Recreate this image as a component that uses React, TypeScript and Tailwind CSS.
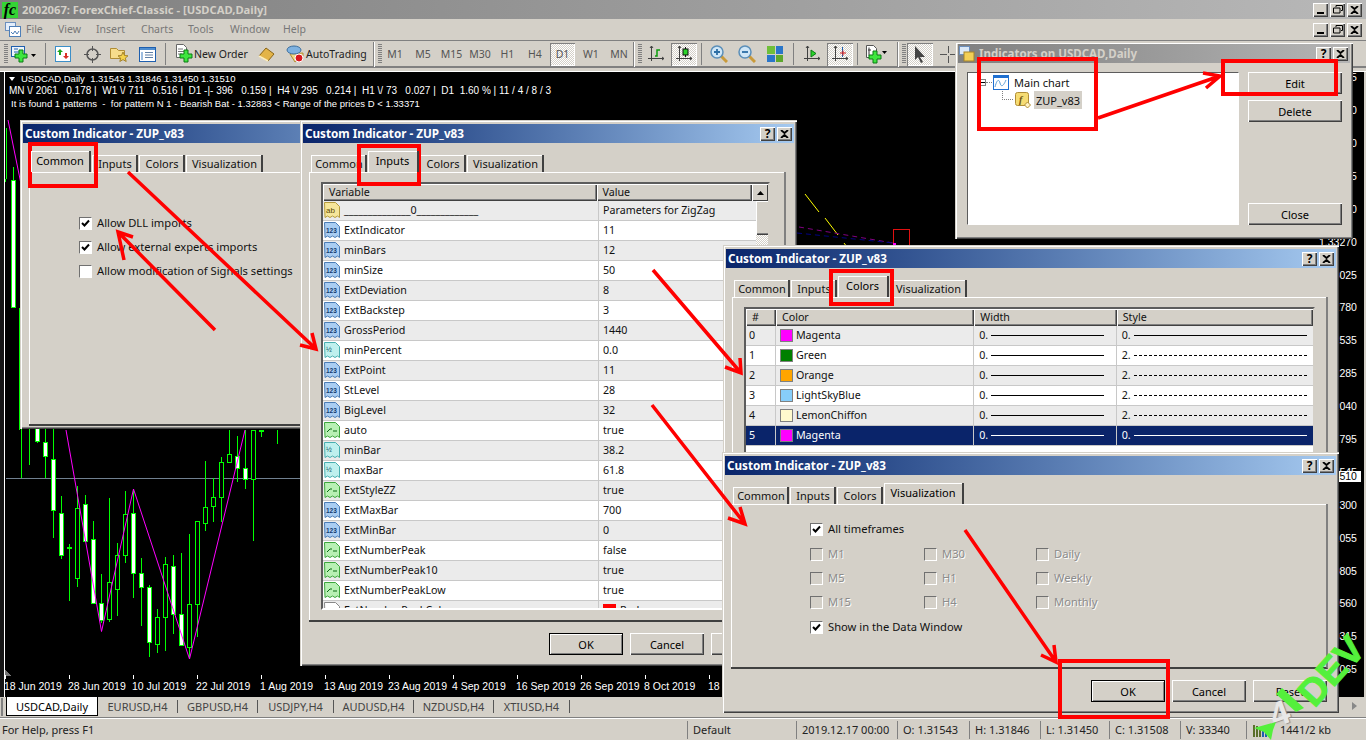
import type { ReactNode } from "react";

const raised = "shadow-[inset_1px_1px_0_#fff,inset_-1px_-1px_0_#404040,inset_-2px_-2px_0_#808080]";
const winFrame =
  "shadow-[inset_1px_1px_0_#d4d0c8,inset_2px_2px_0_#fff,inset_-1px_-1px_0_#404040,inset_-2px_-2px_0_#808080]";

// candles: [x in 8px steps, wick top, wick bottom, body top, body bottom, white body]
const candles: [number, number, number, number, number, boolean][] = [
  [0, 300, 478, 0, 0, false],
  [1, 300, 465, 0, 0, false],
  [2, 300, 443, 300, 441, true],
  [3, 300, 478, 442, 456, true],
  [4, 300, 538, 459, 510, true],
  [5, 496, 559, 513, 555, true],
  [6, 544, 601, 547, 548, false],
  [7, 486, 587, 508, 578, false],
  [8, 495, 542, 504, 541, true],
  [9, 521, 604, 539, 603, true],
  [10, 574, 623, 603, 620, true],
  [11, 498, 622, 582, 619, false],
  [12, 543, 616, 555, 589, false],
  [13, 491, 563, 514, 555, false],
  [14, 489, 598, 513, 573, true],
  [15, 558, 626, 573, 587, true],
  [16, 585, 657, 587, 642, true],
  [17, 609, 653, 617, 644, false],
  [18, 557, 651, 564, 617, false],
  [19, 555, 634, 566, 614, true],
  [20, 553, 646, 614, 645, true],
  [21, 534, 658, 604, 647, false],
  [22, 521, 637, 521, 604, false],
  [23, 461, 531, 507, 523, false],
  [24, 478, 522, 497, 506, false],
  [25, 457, 522, 462, 497, false],
  [26, 430, 463, 454, 462, false],
  [27, 436, 482, 456, 468, true],
  [28, 430, 489, 468, 479, true],
  [29, 430, 541, 430, 479, false],
  [30, 430, 437, 430, 431, false],
  [32, 430, 444, 0, 0, false],
];

function PriceChart() {
  const ticks = Array.from({ length: 12 }, (_, i) => 5 + i * 64);
  return (
    <svg className="absolute left-[-5px] top-[-72px] h-[740px] w-[1366px]" viewBox="0 0 1366 740" fill="none" shapeRendering="crispEdges">
      <path d="M5.5 478.5H1340" stroke="#708090" />
      <path d="M6.5 128V179M5.5 179V182" stroke="#0f0" />
      <rect x="11.5" y="180" width="4" height="127" fill="#fff" stroke="#0f0" />
      <path d="M13.5 167V180M19.5 308V430" stroke="#0f0" />
      {candles.map(([k, wt, wb, bt, bb, white]) => {
        const x = 21.5 + k * 8;
        return (
          <g key={k}>
            <path d={`M${x} ${wt}V${wb}`} stroke="#0f0" />
            {bb > 0 && <rect x={x - 2} y={bt + 0.5} width="4" height={bb - bt} fill={white ? "#fff" : "#000"} stroke="#0f0" />}
          </g>
        );
      })}
      <g shapeRendering="auto">
        <path d="M66 430L101.5 631.5L133.5 489L189.5 659L245 430" stroke="#f0f" />
        <path d="M8 120L21 184" stroke="#f0f" />
        <path d="M805 194L819 212M825 218L838 235M844 243L847 247" stroke="#ff0" />
        <path d="M799 227L893 243" stroke="#800080" strokeDasharray="5 4" />
        <path d="M797 233L893 243" stroke="#000080" strokeDasharray="5 4" />
      </g>
      <rect x="893.5" y="229.5" width="16" height="22" stroke="#e01010" />
      <rect x="893" y="243" width="3" height="4" fill="#f0f" />
      <path d="M5 670V676H11z" fill="#777" />
      {ticks.map((t) => (
        <path key={t} d={`M${t + 0.5} 675V679`} stroke="#fff" />
      ))}
    </svg>
  );
}

const axisDates = [
  "18 Jun 2019", "28 Jun 2019", "10 Jul 2019", "22 Jul 2019", "1 Aug 2019", "13 Aug 2019",
  "23 Aug 2019", "4 Sep 2019", "16 Sep 2019", "26 Sep 2019", "8 Oct 2019", "18 Oct 2019",
];
const priceLabels = [
  "1.34255", "1.34010", "1.33760", "1.33515", "1.33520", "1.33270", "1.33025", "1.32780", "1.32535",
  "1.32285", "1.32040", "1.31795", "1.31545", "1.31300", "1.31055", "1.30805", "1.30560", "1.30315", "1.30065",
];

function Doc({ fill, stroke, children }: { fill: string; stroke: string; children?: ReactNode }) {
  return (
    <svg width="16" height="17" viewBox="0 0 16 17" className="shrink-0">
      <path d="M.5.5h11l4 4v11l-2-1.500-2.500 1.500-2.500-1.500-2.500 1.500-2.500-1.500-2.500 1.500z" fill={fill} stroke={stroke} />
      {children}
    </svg>
  );
}
const rowIcons: Record<string, ReactNode> = {
  ab: (
    <Doc fill="#f6e69a" stroke="#b59b3c">
      <text x="2" y="11" fontSize="8" fill="#5c4a00" fontFamily="Liberation Sans">ab</text>
    </Doc>
  ),
  num: (
    <Doc fill="#a9cdf2" stroke="#4a7cb5">
      <text x="2" y="11" fontSize="6.500" fontWeight="700" fill="#123a70" fontFamily="Liberation Sans">123</text>
    </Doc>
  ),
  half: (
    <Doc fill="#bff0ee" stroke="#48aeb0">
      <text x="2" y="10" fontSize="7" fill="#0c5a66" fontFamily="Liberation Sans">½</text>
    </Doc>
  ),
  bool: (
    <Doc fill="#b8f0b4" stroke="#3da63d">
      <path d="M3 10l3-3h2M9 9h4" stroke="#0a6a14" fill="none" />
    </Doc>
  ),
  color: (
    <Doc fill="#fff" stroke="#888">
      <rect x="2" y="8" width="12" height="4" fill="#f5a623" />
    </Doc>
  ),
};

const inputRows: [string, string, string][] = [
  ["ab", "______________0_____________", "Parameters for ZigZag"],
  ["num", "ExtIndicator", "11"],
  ["num", "minBars", "12"],
  ["num", "minSize", "50"],
  ["num", "ExtDeviation", "8"],
  ["num", "ExtBackstep", "3"],
  ["num", "GrossPeriod", "1440"],
  ["half", "minPercent", "0.0"],
  ["num", "ExtPoint", "11"],
  ["num", "StLevel", "28"],
  ["num", "BigLevel", "32"],
  ["bool", "auto", "true"],
  ["half", "minBar", "38.2"],
  ["half", "maxBar", "61.8"],
  ["bool", "ExtStyleZZ", "true"],
  ["num", "ExtMaxBar", "700"],
  ["num", "ExtMinBar", "0"],
  ["bool", "ExtNumberPeak", "false"],
  ["bool", "ExtNumberPeak10", "true"],
  ["bool", "ExtNumberPeakLow", "true"],
  ["color", "ExtNumberPeakColor", "Red"],
];

const colorRows: [string, string, string, boolean][] = [
  ["Magenta", "bg-[#ff00ff]", "0.", false],
  ["Green", "bg-[#008000]", "2.", true],
  ["Orange", "bg-[#ffa500]", "2.", true],
  ["LightSkyBlue", "bg-[#87cefa]", "2.", true],
  ["LemonChiffon", "bg-[#fffacd]", "2.", true],
  ["Magenta", "bg-[#ff00ff]", "0.", false],
];

function WinButtons({ small }: { small?: boolean }) {
  const cls = `flex h-[14px] w-[15px] items-center justify-center bg-[#d4d0c8] ${raised}`;
  if (small) {
    return (
      <div className="ml-auto mr-[2px] flex gap-[2px]">
        <div className={`${cls} text-[12px] font-bold text-black`}>?</div>
        <div className={cls}>
          <svg width="9" height="8" viewBox="0 0 9 8"><path d="M1 0l3.500 3L8 0M1 8l3.500-3L8 8" stroke="#000" strokeWidth="1.800" fill="none" /></svg>
        </div>
      </div>
    );
  }
  return (
    <div className="ml-auto mr-[4px] flex gap-[2px]">
      <div className={cls}><div className="mt-[6px] h-[2px] w-[7px] bg-black" /></div>
      <div className={cls}>
        <svg width="10" height="9" viewBox="0 0 10 9"><path d="M3 2V.5h6.500v5H8M.5 3h6.500v5H.5z" stroke="#000" fill="none" /></svg>
      </div>
      <div className={cls}>
        <svg width="9" height="8" viewBox="0 0 9 8"><path d="M1 0l3.500 3L8 0M1 8l3.500-3L8 8" stroke="#000" strokeWidth="1.800" fill="none" /></svg>
      </div>
    </div>
  );
}

function Btn({ children, primary, className = "h-[22px] w-[74px]" }: { children?: ReactNode; primary?: boolean; className?: string }) {
  return (
    <div className={`flex items-center justify-center bg-[#d4d0c8] text-black ${className} ${primary ? "border border-black shadow-[inset_1px_1px_0_#fff,inset_-1px_-1px_0_#808080]" : raised}`}>
      {children}
    </div>
  );
}

const tabDefs = [
  { label: "Common", w: "w-[56px]", aw: "w-[60px]" },
  { label: "Inputs", w: "w-[46px]", aw: "w-[51px]" },
  { label: "Colors", w: "w-[46px]", aw: "w-[51px]" },
  { label: "Visualization", w: "w-[77px]", aw: "w-[80px]" },
];

function Dialog({ className, active, footer, children }: { className: string; active: number; footer?: boolean; children?: ReactNode }) {
  return (
    <div className={`absolute flex flex-col bg-[#d4d0c8] px-[3px] pb-[3px] pt-[4px] ${winFrame} ${className}`}>
      <div className="flex h-[19px] shrink-0 items-center bg-gradient-to-r from-[#0a246a] to-[#a6caf0] pl-[2px] text-[11.700px] font-bold text-white">
        Custom Indicator - ZUP_v83
        <WinButtons small />
      </div>
      <div className="ml-[8px] mt-[9px] flex h-[20px] shrink-0 items-end gap-[1px]">
        {tabDefs.map((t, i) => (
          <div
            key={t.label}
            className={
              i === active
                ? `relative z-10 flex h-[21px] ${t.aw} items-start justify-center border-r-2 border-r-[#404040] bg-[#d4d0c8] pt-[4px] text-black shadow-[inset_1px_1px_0_#fff]`
                : `flex h-[17px] ${t.w} items-center justify-center border-r-2 border-r-[#404040] bg-[#d4d0c8] pl-[2px] text-[#111] shadow-[inset_1px_1px_0_#fff]`
            }
          >
            {t.label}
          </div>
        ))}
      </div>
      <div className="ml-[6px] mr-[8px] min-h-0 flex-1 border-b-2 border-r-2 border-b-[#404040] border-r-[#808080] shadow-[inset_1px_1px_0_#fff]">
        {children}
      </div>
      {footer && (
        <div className="mr-[9px] flex h-[41px] shrink-0 justify-end gap-[7px] pt-[11px]">
          <Btn primary>OK</Btn>
          <Btn>Cancel</Btn>
          <Btn>Reset</Btn>
        </div>
      )}
    </div>
  );
}

function Check({ checked, disabled }: { checked?: boolean; disabled?: boolean }) {
  return (
    <div className={`flex h-[13px] w-[13px] shrink-0 items-center justify-center border border-t-[#707070] border-l-[#707070] border-r-white border-b-white ${disabled ? "bg-[#d4d0c8]" : "bg-white"}`}>
      {checked && (
        <svg width="9" height="9" viewBox="0 0 9 9"><path d="M1 4l2.500 2.500L8 1.500" stroke="#000" strokeWidth="2" fill="none" /></svg>
      )}
    </div>
  );
}

function CheckRow({ label, checked, disabled, className = "" }: { label: string; checked?: boolean; disabled?: boolean; className?: string }) {
  return (
    <div className={`flex h-[14px] items-center gap-[5px] text-[11.200px] ${className}`}>
      <Check checked={checked} disabled={disabled} />
      <span className={disabled ? "text-[#8c8c8c] [text-shadow:1px_1px_0_#fff]" : "text-[#111]"}>{label}</span>
    </div>
  );
}

function HeadCell({ children, className }: { children?: ReactNode; className: string }) {
  return <div className={`flex h-[17px] items-center bg-[#d4d0c8] pl-[6px] text-[#111] ${raised} ${className}`}>{children}</div>;
}

function Axes({ children }: { children?: ReactNode }) {
  return (
    <svg width="18" height="18" viewBox="0 0 18 18" fill="none">
      <path d="M4.500 1v15M1 13.500h16M3 3l1.500-2L6 3M15 12l2 1.500-2 1.500" stroke="#404040" />
      {children}
    </svg>
  );
}

function GreenPlus({ x, y }: { x: number; y: number }) {
  return <path d={`M${x + 4} ${y}h4v4h4v4h-4v4h-4v-4h-4v-4h4z`} fill="#3ee63e" stroke="#0b7a14" />;
}

function Magnifier({ plus }: { plus?: boolean }) {
  return (
    <svg width="18" height="18" viewBox="0 0 18 18" fill="none">
      <path d="M11 11l6 6" stroke="#c99a3a" strokeWidth="3" />
      <circle cx="7" cy="7" r="6" fill="#cfe6f7" stroke="#5b8fb9" strokeWidth="1.500" />
      <path d={plus ? "M4 7h6M7 4v6" : "M4 7h6"} stroke="#2c6ea5" strokeWidth="1.800" />
    </svg>
  );
}

function TB({ w, active, children, className = "" }: { w: string; active?: boolean; children?: ReactNode; className?: string }) {
  return (
    <div
      className={`flex h-[23px] shrink-0 items-center justify-center ${w} ${className} ${
        active
          ? "bg-[repeating-conic-gradient(#fff_0_25%,#d4d0c8_0_50%)] bg-[length:2px_2px] shadow-[inset_1px_1px_0_#808080,inset_-1px_-1px_0_#fff]"
          : ""
      }`}
    >
      {children}
    </div>
  );
}
const Sep = () => <div className="mx-[4px] h-[22px] w-[2px] shrink-0 border-l border-l-[#808080] bg-[#d4d0c8]" />;
const Grip = () => (
  <div className="mx-[3px] h-[20px] w-[4px] shrink-0 bg-[repeating-linear-gradient(#808080_0_1px,#d4d0c8_1px_2px)]" />
);
const EndBar = () => <div className="h-[25px] w-[2px] shrink-0 border-l border-l-[#808080] bg-white" />;

function Toolbar() {
  return (
    <div className="flex h-[28px] shrink-0 items-center border-t border-b-2 border-t-[#808080] border-b-[#808080] pl-[1px] pt-[1px] text-[10.500px] text-[#222]">
      <Grip />
      <TB w="w-[26px]" className="justify-start">
        <svg width="26" height="18" viewBox="0 0 26 18" fill="none">
          <rect x=".5" y="1.500" width="13" height="10" fill="#eef4fb" stroke="#1f5fae" />
          <path d="M3 4h4M3 7h6" stroke="#1f5fae" />
          <GreenPlus x={4} y={5} />
          <path d="M20 9h5l-2.500 3z" fill="#000" />
        </svg>
      </TB>
      <div className="ml-[4px]"><Sep /></div>
      <TB w="w-[28px]" className="-ml-[2px]">
        <svg width="16" height="16" viewBox="0 0 16 16" fill="none">
          <rect x=".5" y=".5" width="15" height="15" fill="#fff" stroke="#3c8fc8" />
          <path d="M5 3L2 6h2v3h2V6h2z" fill="#1fa51f" />
          <path d="M11 13l3-3h-2V7h-2v3H8z" fill="#d93025" />
        </svg>
      </TB>
      <TB w="w-[28px]" className="ml-[1px]">
        <svg width="17" height="17" viewBox="0 0 17 17" fill="none">
          <circle cx="8.500" cy="8.500" r="5.500" stroke="#555" strokeWidth="1.500" />
          <path d="M8.500 0v5M8.500 12v5M0 8.500h5M12 8.500h5" stroke="#555" />
        </svg>
      </TB>
      <TB w="w-[28px]" className="-ml-[1px]">
        <svg width="19" height="17" viewBox="0 0 19 17" fill="none">
          <path d="M.5 2.500h6l2 2h6v8h-14z" fill="#f7dd8c" stroke="#b08d35" />
          <path d="M13 6l1.500 3.500 3.500.3-2.700 2.300.9 3.400-3.200-1.900-3.200 1.900.9-3.400-2.700-2.300 3.500-.3z" fill="#f5d24a" stroke="#a6842b" />
        </svg>
      </TB>
      <TB w="w-[28px]">
        <svg width="17" height="15" viewBox="0 0 17 15" fill="none">
          <rect x=".5" y=".5" width="16" height="14" fill="#fff" stroke="#1f5fae" />
          <path d="M1 1.500h15M1 2.500h15" stroke="#4f8ed0" />
          <path d="M3 5v8" stroke="#9dbde0" strokeWidth="2" />
          <path d="M6 5.500h8M6 8h8M6 10.500h8" stroke="#5f7fa5" />
        </svg>
      </TB>
      <Sep />
      <TB w="w-[18px]" className="ml-[4px]">
        <svg width="18" height="20" viewBox="0 0 18 20" fill="none">
          <path d="M1.500.5h7l3 3v10h-10z" fill="#fff" stroke="#666" />
          <path d="M3 5h5M3 7.500h6M3 10h4" stroke="#777" />
          <GreenPlus x={5} y={6} />
        </svg>
      </TB>
      <span className="ml-[1px] w-[52px] whitespace-nowrap">New Order</span>
      <TB w="w-[20px]" className="ml-[11px]">
        <svg width="18" height="15" viewBox="0 0 18 15" fill="none">
          <path d="M1 9l7-8 8 6-6 7z" fill="#e3b448" stroke="#8a6417" />
          <path d="M1 9l9 5" stroke="#fff0c0" strokeWidth="1.500" />
        </svg>
      </TB>
      <TB w="w-[19px]" className="ml-[8px]">
        <svg width="18" height="18" viewBox="0 0 18 18" fill="none">
          <path d="M4 9l5 8 8-6V8z" fill="#f3dc86" stroke="#b08d35" />
          <ellipse cx="8" cy="5" rx="7" ry="4" fill="#7fb2e0" stroke="#3d6f9e" />
          <circle cx="13" cy="13" r="4" fill="#d9171e" stroke="#fff" />
        </svg>
      </TB>
      <span className="ml-[2px] w-[59px] whitespace-nowrap">AutoTrading</span>
      <div className="ml-[8px]"><EndBar /></div>
      <Grip />
      <div className="-ml-[4px] flex text-[10.500px] text-[#555]">
        <TB w="w-[28px]">M1</TB>
        <TB w="w-[28px]">M5</TB>
        <TB w="w-[29px]">M15</TB>
        <TB w="w-[28px]">M30</TB>
        <TB w="w-[27px]">H1</TB>
        <TB w="w-[28px]">H4</TB>
        <TB w="w-[25px]" active className="ml-[1px]">D1</TB>
        <TB w="w-[28px]" className="ml-[2px]">W1</TB>
        <TB w="w-[28px]">MN</TB>
      </div>
      <EndBar />
      <Grip />
      <TB w="w-[26px]" className="-ml-[2px]">
        <Axes><path d="M8 11h2V5h3" stroke="#0c9c0c" strokeWidth="1.500" /></Axes>
      </TB>
      <TB w="w-[26px]" active className="ml-[2px]">
        <Axes>
          <path d="M10.500 2v10" stroke="#111" />
          <rect x="8" y="4" width="5" height="6" fill="#2bd42b" stroke="#111" />
        </Axes>
      </TB>
      <Sep />
      <TB w="w-[20px]" className="ml-[2px]"><Magnifier plus /></TB>
      <TB w="w-[20px]" className="ml-[8px]"><Magnifier /></TB>
      <TB w="w-[18px]" className="ml-[9px]">
        <div className="grid h-[16px] w-[16px] grid-cols-2 gap-[1px]">
          <div className="bg-[#6fbf3a]" /><div className="bg-[#2a76c9]" />
          <div className="bg-[#2a76c9]" /><div className="bg-[#5da82d]" />
        </div>
      </TB>
      <div className="ml-[5px]"><Sep /></div>
      <TB w="w-[24px]" className="ml-[1px]">
        <Axes><path d="M8 5l5 3.500-5 3.500z" fill="#2bd42b" stroke="#0b7a14" /></Axes>
      </TB>
      <TB w="w-[26px]" active className="ml-[3px]">
        <Axes><path d="M11.500 2v10" stroke="#1f5fae" /><path d="M9 8h6M12 5.500v5" stroke="#d91f1f" /></Axes>
      </TB>
      <Sep />
      <TB w="w-[24px]" className="ml-[2px]">
        <svg width="24" height="20" viewBox="0 0 24 20" fill="none">
          <path d="M1.500 1.500h7l3 3v9h-10z" fill="#fff" stroke="#555" />
          <path d="M4 3.500v8M3 6h3" stroke="#333" />
          <GreenPlus x={4} y={7} />
          <path d="M17 7h5l-2.500 3z" fill="#000" />
        </svg>
      </TB>
      <div className="ml-[8px]"><EndBar /></div>
      <Grip />
      <TB w="w-[26px]" active className="-ml-[2px]">
        <svg width="14" height="17" viewBox="0 0 14 17"><path d="M2 0v14l3-3 3 6 2-1-3-5h5z" fill="#444" /></svg>
      </TB>
      <TB w="w-[22px]" className="ml-[4px]">
        <svg width="19" height="19" viewBox="0 0 19 19"><path d="M9.500 1v7M9.500 11v7M1 9.500h7M11 9.500h7" stroke="#555" /></svg>
      </TB>
    </div>
  );
}

function Annotations() {
  const rects = [
    [30, 144, 66, 42],
    [359, 146, 60, 38],
    [831, 271, 61, 33],
    [1060, 661, 108, 56],
    [979, 59, 117, 70],
    [1223, 61, 113, 33],
  ];
  const arrows = [
    "M1098 118L1220 76M1203 73L1220 76L1206 88",
    "M215 330L118 232M133 237L118 232L124 260",
    "M128 172L316 349M300 345L316 349L312 333",
    "M653 270L741 373M725 367L741 373L740 358",
    "M652 405L745 524M728 518L745 524L740 507",
    "M965 530L1056 662M1041 655L1056 662L1054 645",
  ];
  return (
    <svg className="pointer-events-none absolute inset-0 h-[740px] w-[1366px]" viewBox="0 0 1366 740" fill="none">
      {rects.map(([x, y, w, h]) => (
        <rect key={x} x={x} y={y} width={w} height={h} stroke="#f00" strokeWidth="4" />
      ))}
      {arrows.map((d) => (
        <path key={d} d={d} stroke="#f00" strokeWidth="3.500" />
      ))}
    </svg>
  );
}

const statusCells = [
  { text: "Default", w: "w-[109px]" },
  { text: "2019.12.17 00:00", w: "w-[101px]" },
  { text: "O: 1.31543", w: "w-[72px]" },
  { text: "H: 1.31846", w: "w-[71px]" },
  { text: "L: 1.31450", w: "w-[69px]" },
  { text: "C: 1.31508", w: "w-[71px]" },
  { text: "V: 33340", w: "w-[66px]" },
];

const symbolTabs = [
  { s: "EURUSD,H4", w: "w-[80px]" },
  { s: "GBPUSD,H4", w: "w-[80px]" },
  { s: "USDJPY,H4", w: "w-[76px]" },
  { s: "AUDUSD,H4", w: "w-[80px]" },
  { s: "NZDUSD,H4", w: "w-[80px]" },
  { s: "XTIUSD,H4", w: "w-[76px]" },
];

export default function App() {
  return (
    <div className="relative flex h-[740px] w-[1366px] flex-col overflow-hidden bg-[#d4d0c8] font-['Noto_Sans',sans-serif] text-[11px] leading-none">
      {/* app title */}
      <div className="flex h-[19px] shrink-0 items-center bg-gradient-to-r from-[#7f7f7f] to-[#b8b8b8] pl-[2px]">
        <div className="mr-[4px] flex h-[16px] w-[16px] items-center justify-center bg-[#35d435] font-['Liberation_Serif',serif] text-[16px] font-bold italic text-black">fc</div>
        <span className="text-[11.200px] font-bold text-[#d4d0c8]">2002067: ForexChief-Classic - [USDCAD,Daily]</span>
        <WinButtons />
      </div>
      {/* menu */}
      <div className="flex h-[21px] shrink-0 items-center pl-[5px] text-[10.500px] text-[#777]">
        <svg width="16" height="15" viewBox="0 0 16 15" fill="none" className="mr-[5px]">
          <rect x=".5" y=".5" width="10" height="8" fill="#e4eefb" stroke="#6b8fbd" />
          <rect x="4.500" y="4.500" width="11" height="10" fill="#fff" stroke="#4e7fb8" />
          <path d="M6 10l2 2 2-3 2 3 2-3" stroke="#4e7fb8" />
        </svg>
        <span className="w-[32px]">File</span>
        <span className="w-[38px]">View</span>
        <span className="w-[45px]">Insert</span>
        <span className="w-[47px]">Charts</span>
        <span className="w-[42px]">Tools</span>
        <span className="w-[53px]">Window</span>
        <span>Help</span>
        <WinButtons />
      </div>
      <Toolbar />

      {/* chart */}
      <div className="mt-[3px] flex h-[626px] shrink-0 border-t border-t-white">
        <div className="w-[4px] bg-[#141414]" />
        <div className="relative flex-1 overflow-hidden border-l border-l-white bg-black font-['Liberation_Sans',sans-serif] text-[11px] text-white">
          <PriceChart />
          <div className="absolute left-[4px] top-[1px] flex flex-col gap-[1px] whitespace-pre">
            <div className="flex h-[12px] items-center gap-[5px] text-[9.500px]">
              <svg width="6" height="4" viewBox="0 0 6 4"><path d="M0 0h6L3 4z" fill="#fff" /></svg>
              <span className="ml-[1px]">USDCAD,Daily  1.31543 1.31846 1.31450 1.31510</span>
            </div>
            <div className="h-[12px] text-[10px]">MN \/ 2061   0.178 |  W1 \/ 711   0.516 |  D1 -|- 396   0.159 |  H4 \/ 295   0.214 |  H1 \/ 73   0.027 |  D1  1.60 % | 11 / 4 / 8 / 3</div>
            <div className="ml-[2px] h-[12px] text-[9.500px]">It is found 1 patterns  -  for pattern N 1 - Bearish Bat - 1.32883 &lt; Range of the prices D &lt; 1.33371</div>
          </div>
          <div className="absolute bottom-[6px] left-[-1px] flex text-[10.500px]">
            {axisDates.map((d) => (
              <div key={d} className="w-[64px] whitespace-nowrap">{d}</div>
            ))}
          </div>
          <div className="absolute left-[1314px] top-[-11px] flex flex-col text-[10.500px]">
            {priceLabels.map((p) => (
              <div key={p} className="flex h-[32.900px] items-center">{p}</div>
            ))}
          </div>
          <div className="absolute left-[1314px] top-[399px] bg-white pr-[4px] text-[10.500px] text-black">1.31510</div>
        </div>
        <div className="w-[2px]" />
      </div>

      {/* symbol tabs */}
      <div className="flex h-[21px] shrink-0 items-start border-b border-b-[#808080] pl-[1px] text-[#444]">
        <div className="mr-[3px] mt-[1px] h-[18px] w-[2px] bg-[#808080]" />
        <div className="flex h-[19px] w-[92px] items-center justify-center border border-t-0 border-black bg-white text-black">USDCAD,Daily</div>
        {symbolTabs.map((t) => (
          <div key={t.s} className={`mt-[3px] flex h-[13px] items-center justify-center border-r border-r-[#555] ${t.w}`}>{t.s}</div>
        ))}
        <svg width="6" height="8" viewBox="0 0 6 8" className="ml-auto mr-[8px] mt-[5px]"><path d="M0 0l5 4-5 4z" fill="#888" /></svg>
      </div>

      {/* status bar */}
      <div className="flex min-h-0 flex-1 items-center border-t border-t-white pl-[2px] text-[#222]">
        <div className="w-[685px]">For Help, press F1</div>
        {statusCells.map((c) => (
          <div key={c.text} className={`flex h-[18px] shrink-0 items-center border-l border-l-[#808080] pl-[5px] ${c.w}`}>{c.text}</div>
        ))}
        <div className="flex h-[18px] items-center border-l border-l-[#808080] pl-[5px]">
          <svg width="22" height="14" viewBox="0 0 22 14" className="mr-[6px]">
            <path d="M1 14V2h2v12zM4 14V3h2v11zM7 14V4h2v10z" fill="#5a6e2a" />
            <path d="M10 14V7h2v7zM13 14V8h2v6zM16 14V9h2v5z" fill="#1f5fae" />
          </svg>
          1441/2 kb
        </div>
      </div>

      {/* windows */}
      <Dialog active={0} className="left-[20px] top-[120px] h-[309px] w-[497px]">
        <div className="mb-[42px] h-[212px]">
          <div className="flex flex-col gap-[10px] pl-[50px] pt-[44px]">
            <CheckRow label="Allow DLL imports" checked />
            <CheckRow label="Allow external experts imports" checked />
            <CheckRow label="Allow modification of Signals settings" />
          </div>
        </div>
      </Dialog>

      <Dialog active={1} footer className="left-[300px] top-[120px] h-[546px] w-[497px]">
        <div className="ml-[12px] mr-[14px] mt-[10px] flex h-[428px] flex-col overflow-hidden border-2 border-b-white border-l-[#5c5c5c] border-r-[#d4d0c8] border-t-[#5c5c5c] text-[10.700px]">
          <div className="flex shrink-0">
            <HeadCell className="w-[276px]">Variable</HeadCell>
            <HeadCell className="w-[157px]">Value</HeadCell>
            <div className="flex h-[17px] w-[16px] items-center justify-center bg-[#d4d0c8] shadow-[inset_1px_1px_0_#fff,inset_-1px_-1px_0_#404040]">
              <svg width="7" height="4" viewBox="0 0 7 4"><path d="M3.500 0L7 4H0z" fill="#000" /></svg>
            </div>
          </div>
          <div className="flex min-h-0 flex-1">
            <div className="w-[433px] shrink-0">
              {inputRows.map(([icon, name, val], i) => (
                <div key={name} className={`flex h-[20px] items-center border-b border-b-[#c8c8c8] ${i % 2 === 0 ? "bg-[#ebebeb]" : "bg-white"}`}>
                  <div className="flex h-full w-[276px] items-center gap-[4px] border-r border-r-[#c8c8c8] pl-[1px] text-[#111]">
                    {rowIcons[icon]}
                    {name}
                  </div>
                  <div className="flex items-center gap-[4px] pl-[4px] text-[#111]">
                    {val === "Red" && <div className="h-[13px] w-[13px] bg-[#ff0000]" />}
                    {val}
                  </div>
                </div>
              ))}
            </div>
            <div className="flex w-[16px] shrink-0 flex-col">
              <div className={`h-[34px] w-[16px] bg-[#d4d0c8] ${raised}`} />
              <div className="flex-1 bg-[repeating-conic-gradient(#fff_0_25%,#d4d0c8_0_50%)] bg-[length:2px_2px]" />
            </div>
          </div>
        </div>
      </Dialog>

      <Dialog active={2} className="left-[723px] top-[245px] h-[240px] w-[616px]">
        <div className="ml-[12px] mr-[11px] mt-[10px] h-[200px] overflow-hidden border-2 border-b-white border-l-[#5c5c5c] border-r-[#d4d0c8] border-t-[#5c5c5c] bg-white text-[10.700px]">
          <div className="flex">
            <HeadCell className="w-[30px]">#</HeadCell>
            <HeadCell className="w-[199px]">Color</HeadCell>
            <HeadCell className="w-[143px]">Width</HeadCell>
            <HeadCell className="w-[197px]">Style</HeadCell>
          </div>
          {colorRows.map(([name, swatch, style, dashed], i) => {
            const sel = i === 5;
            const rule = sel ? "border-t-white" : "border-t-black";
            return (
              <div key={i} className={`flex h-[20px] items-center border-b border-b-[#c8c8c8] ${sel ? "bg-[#0a246a] text-white" : i % 2 === 0 ? "bg-[#ebebeb] text-[#111]" : "bg-white text-[#111]"}`}>
                <div className="flex h-full w-[30px] items-center border-r border-r-[#c8c8c8] pl-[3px]">{i}</div>
                <div className="flex h-full w-[199px] items-center gap-[3px] border-r border-r-[#c8c8c8] pl-[4px]">
                  <div className={`h-[13px] w-[13px] border border-[#808080] ${swatch}`} />
                  {name}
                </div>
                <div className="flex h-full w-[143px] items-center gap-[3px] border-r border-r-[#c8c8c8] pl-[5px]">
                  <span>0.</span>
                  <div className={`h-0 w-[113px] border-t ${rule}`} />
                </div>
                <div className="flex h-full w-[197px] items-center gap-[3px] pl-[5px]">
                  <span>{style}</span>
                  <div className={`h-0 w-[173px] border-t ${rule} ${dashed ? "border-dashed" : ""}`} />
                </div>
              </div>
            );
          })}
        </div>
      </Dialog>

      <Dialog active={3} footer className="left-[722px] top-[452px] h-[261px] w-[617px]">
        <div className="flex flex-col pl-[79px] pt-[18px]">
          <CheckRow label="All timeframes" checked />
          <div className="mt-[11px] grid w-[340px] grid-cols-[114px_112px_1fr] gap-y-[10px]">
            {["M1", "M30", "Daily", "M5", "H1", "Weekly", "M15", "H4", "Monthly"].map((t) => (
              <CheckRow key={t} label={t} disabled />
            ))}
          </div>
          <CheckRow label="Show in the Data Window" checked className="mt-[11px]" />
        </div>
      </Dialog>

      <div className={`absolute left-[955px] top-[42px] flex h-[197px] w-[398px] flex-col bg-[#d4d0c8] px-[3px] pb-[3px] pt-[2px] ${winFrame}`}>
        <div className="flex h-[19px] shrink-0 items-center bg-gradient-to-r from-[#808080] to-[#b5b5b5] pl-[1px] text-[11.500px] font-bold text-[#d4d0c8]">
          <svg width="16" height="16" viewBox="0 0 16 16" className="mr-[4px]">
            <rect x=".5" y=".5" width="10" height="8" fill="#dbe8f7" stroke="#6b8fbd" />
            <rect x="5" y="6" width="10" height="9" fill="#f3cf55" stroke="#a6842b" />
          </svg>
          Indicators on USDCAD,Daily
          <WinButtons small />
        </div>
        <div className="flex min-h-0 flex-1 pl-[9px] pt-[9px]">
          <div className="relative h-[153px] w-[272px] shrink-0 border border-b-white border-l-[#5c5c5c] border-r-white border-t-[#5c5c5c] bg-white text-[#111]">
            <div className="ml-[11px] flex h-[18px] items-center">
              <div className="flex h-[7px] w-[7px] items-center justify-center border border-[#808080]"><div className="h-[1px] w-[5px] bg-black" /></div>
              <div className="mr-[1px] w-[6px] border-t border-dotted border-t-[#808080]" />
              <svg width="16" height="15" viewBox="0 0 16 15" fill="none" className="mr-[5px]">
                <rect x=".5" y=".5" width="15" height="14" fill="#fff" stroke="#1f6fd0" />
                <path d="M1 1.500h14M1 2.500h14" stroke="#1f6fd0" />
                <path d="M2 12c2-8 4-8 5-4s3 4 6-3" stroke="#5b9ed6" />
              </svg>
              Main chart
            </div>
            <div className="ml-[47px] flex h-[18px] items-center">
              <svg width="16" height="16" viewBox="0 0 16 16" className="mr-[3px]">
                <rect x=".5" y=".5" width="13" height="13" rx="2" fill="#f6dc73" stroke="#b08d35" />
                <text x="4" y="11" fontSize="10" fontStyle="italic" fontWeight="700" fill="#6d5410" fontFamily="Liberation Serif">f</text>
                <path d="M12.500 10l3 3-3 3-3-3z" fill="#fff3c4" stroke="#b08d35" />
              </svg>
              <span className="flex h-[18px] items-center bg-[#d4d0c8] px-[2px]">ZUP_v83</span>
            </div>
            <div className="absolute left-[34px] top-[18px] h-[9px] w-[11px] border-b border-l border-dotted border-[#808080]" />
          </div>
          <div className="ml-[9px] flex w-[94px] flex-col">
            <Btn className="h-[22px] w-[94px]">Edit</Btn>
            <Btn className="mt-[6px] h-[22px] w-[94px]">Delete</Btn>
            <Btn className="mt-[81px] h-[22px] w-[94px]">Close</Btn>
          </div>
        </div>
      </div>

      <Annotations />

      {/* watermark */}
      <div className="absolute left-[1292px] top-[652px] rotate-[-48deg] font-['Liberation_Sans',sans-serif] text-[38px] font-bold text-[#54f03c] [-webkit-text-stroke:1px_#54f03c]">DEV</div>
      <div className="absolute left-[1270px] top-[696px] rotate-[-20deg] font-['Liberation_Sans',sans-serif] text-[34px] font-bold text-[#e8e8e8] [text-shadow:1px_1px_1px_#888]">4</div>
      <svg className="pointer-events-none absolute left-[1250px] top-[680px] h-[60px] w-[60px]" viewBox="0 0 60 60">
        <path d="M4 48l22-6-3 8-2 10-7-8z" fill="#54f03c" />
        <path d="M32 8l22 20-8 4-20-18z" fill="#54f03c" />
      </svg>
    </div>
  );
}
